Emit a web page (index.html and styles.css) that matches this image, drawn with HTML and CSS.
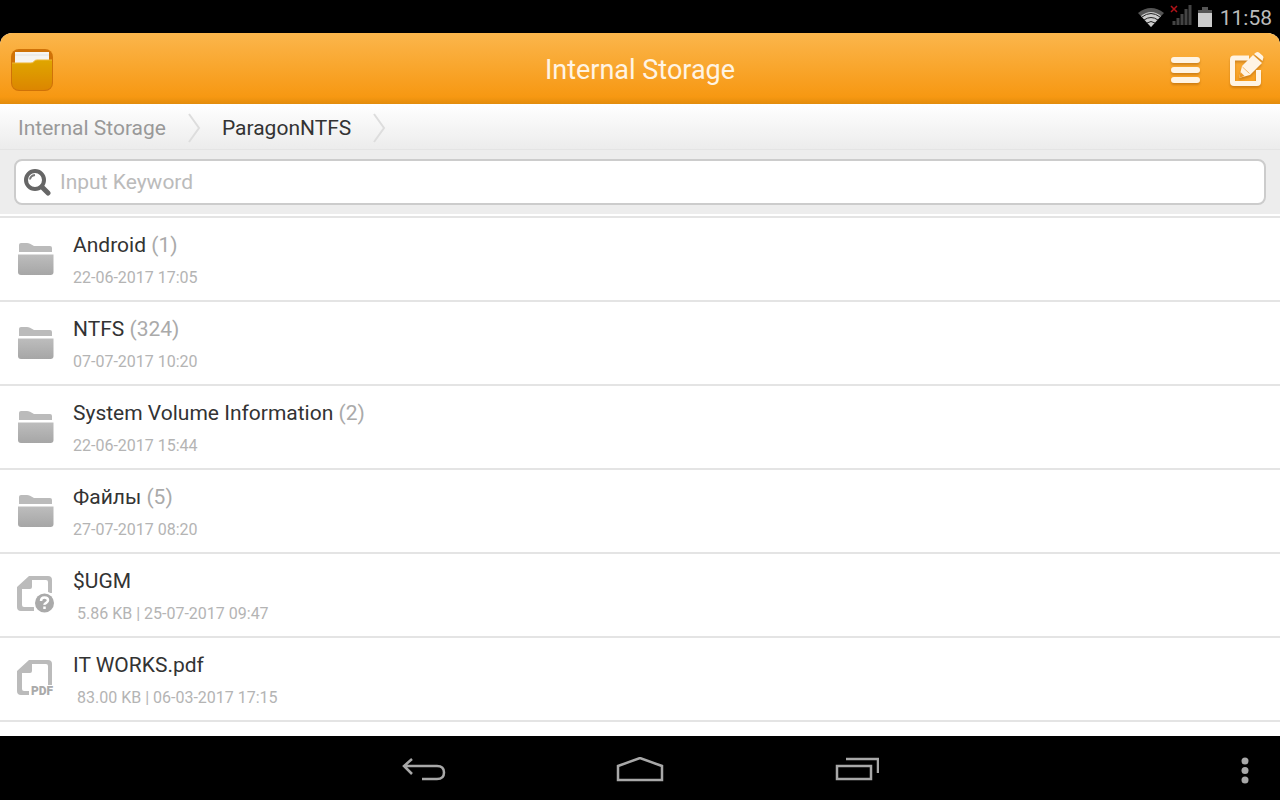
FILE: index.html
```html
<!DOCTYPE html>
<html lang="en">
<head>
    <meta charset="UTF-8">
    <meta name="viewport" content="width=device-width, initial-scale=1.0">
    <title>Internal Storage</title>
    <link rel="stylesheet" href="styles.css">
</head>
<body>
    <!-- shared icons -->
    <svg class="sprite" aria-hidden="true">
        <defs>
            <linearGradient id="grey" x1="0" y1="0" x2="0" y2="1">
                <stop offset="0" stop-color="#bdbdbd"/>
                <stop offset="1" stop-color="#a6a6a6"/>
            </linearGradient>
            <linearGradient id="gold" x1="0" y1="0" x2="0" y2="1">
                <stop offset="0" stop-color="#dfa600"/>
                <stop offset="1" stop-color="#dc8600"/>
            </linearGradient>
        </defs>
        <symbol id="folder" viewBox="0 0 40 40">
            <path d="M2 13V6q0-2 2-2H10q1.500 0 3 .8l4 2.200H33q2 0 2 2V13z" fill="#bbb"/>
            <path d="M1 15.500H36.500V33q0 3-3 3H4q-3 0-3-3z" fill="url(#grey)"/>
        </symbol>
        <symbol id="page" viewBox="0 0 40 40">
            <path d="M12 1H31q4 0 4 4V18H31V7q0-2-2-2H15V12q0 2-2 2H5V30q0 2 2 2H17V36H4q-4 0-4-4V12z" fill="#bbb"/>
        </symbol>
    </svg>

    <div class="status-bar">
        <svg class="wifi" width="26" height="20" viewBox="0 0 26 20">
            <path d="M0 6Q13-4 26 6L13 20z" fill="#555"/>
            <path d="M3 9Q13 1 23 9L13 20z" fill="#ccc"/>
            <path d="M4 10Q13 3 22 10M6 13Q13 8 20 13M9 16Q13 13 17 16" fill="none" stroke="#222" stroke-width="1"/>
        </svg>
        <svg class="signal" width="24" height="21" viewBox="0 0 24 21">
            <path d="M4 20v-4M8 20v-7M12 20V9M16 20V4M20 20V0" stroke="#444" stroke-width="3"/>
            <path d="M1 1l6 6M7 1L1 7" stroke="#b01218" stroke-width="1.500"/>
        </svg>
        <svg class="battery" width="14" height="20" viewBox="0 0 14 20">
            <path d="M4 0h6v3h4v4H0V3h4z" fill="#555"/>
            <path d="M0 6h14v14H0z" fill="#ccc"/>
        </svg>
        <span class="clock">11:58</span>
    </div>

    <div class="app">
        <header>
            <svg class="logo" width="44" height="44" viewBox="0 0 44 44">
                <rect x="1" y="1" width="42" height="42" rx="8" fill="#cf7208"/>
                <path d="M5 4H39V24H5z" fill="#f6f4f2"/>
                <path d="M5 7H39" stroke="#e2e2e2" stroke-width="1"/>
                <path d="M2 15H21q2 0 3-1.500t3-1.500H42V34q0 8-8 8H10q-8 0-8-8z" fill="url(#gold)"/>
                <path d="M2 15H21q2 0 3-1.500t3-1.500H42" fill="none" stroke="#efb530" stroke-width="1"/>
            </svg>
            <h1>Internal Storage</h1>
            <div class="actions">
                <button type="button" aria-label="Menu">
                    <svg width="36" height="40" viewBox="0 0 36 40">
                        <path d="M8 9H31M8 19H31M8 29H31" stroke="#fff4e4" stroke-width="6" stroke-linecap="round"/>
                    </svg>
                </button>
                <button type="button" aria-label="Edit">
                    <svg width="36" height="40" viewBox="0 0 36 40">
                        <path d="M21 7H6q-1.500 0-1.500 1.500V31q0 1.500 1.500 1.500H29q1.500 0 1.500-1.500V19" fill="none" stroke="#fff4e4" stroke-width="5"/>
                        <path d="M11 27L14 15L25 4L34 12L22 24z" fill="#fff4e4"/>
                        <path d="M26 3L28 1.500q1.500-1 3 0L35 5q1 1.500 0 3L34.500 10z" fill="#fff4e4"/>
                        <path d="M14.500 16l7 6.500" stroke="#f5b764" stroke-width="1"/>
                        <path d="M11 27l1.500-6 4 4z" fill="#ee9a28"/>
                    </svg>
                </button>
            </div>
        </header>

        <nav class="breadcrumb" aria-label="Path">
            <a href="#">Internal Storage</a>
            <svg width="14" height="30" viewBox="0 0 14 30"><path d="M2 1l10 14L2 29" fill="none" stroke="#ddd" stroke-width="2"/></svg>
            <a href="#" class="current">ParagonNTFS</a>
            <svg width="14" height="30" viewBox="0 0 14 30"><path d="M2 1l10 14L2 29" fill="none" stroke="#ddd" stroke-width="2"/></svg>
        </nav>

        <form class="search">
            <label class="search-box">
                <svg width="28" height="28" viewBox="0 0 28 28">
                    <circle cx="11" cy="12" r="9" fill="none" stroke="#666" stroke-width="4"/>
                    <path d="M18 19l6 6" stroke="#666" stroke-width="5" stroke-linecap="round"/>
                    <path d="M6 11.500Q6.500 7.500 11 7" fill="none" stroke="#777" stroke-width="2"/>
                </svg>
                <input type="text" placeholder="Input Keyword" aria-label="Input Keyword">
            </label>
        </form>

        <ul class="files">
            <li>
                <svg class="icon"><use href="#folder"/></svg>
                <div>
                    <div class="name">Android <span>(1)</span></div>
                    <div class="meta">22-06-2017 17:05</div>
                </div>
            </li>
            <li>
                <svg class="icon"><use href="#folder"/></svg>
                <div>
                    <div class="name">NTFS <span>(324)</span></div>
                    <div class="meta">07-07-2017 10:20</div>
                </div>
            </li>
            <li>
                <svg class="icon"><use href="#folder"/></svg>
                <div>
                    <div class="name">System Volume Information <span>(2)</span></div>
                    <div class="meta">22-06-2017 15:44</div>
                </div>
            </li>
            <li>
                <svg class="icon"><use href="#folder"/></svg>
                <div>
                    <div class="name">Файлы <span>(5)</span></div>
                    <div class="meta">27-07-2017 08:20</div>
                </div>
            </li>
            <li>
                <svg class="icon" viewBox="0 0 40 40">
                    <use href="#page" width="40" height="40"/>
                    <circle cx="27.500" cy="28" r="11.500" fill="#fff"/>
                    <circle cx="27.500" cy="28" r="9.500" fill="#aaa"/>
                    <path d="M24 26q0-3.500 3.500-3.500t3.500 2.800q0 1.500-1.800 2.500t-1.700 2M27.500 31.500v2.500" fill="none" stroke="#fff" stroke-width="2.500"/>
                </svg>
                <div>
                    <div class="name">$UGM</div>
                    <div class="meta file">5.86 KB | 25-07-2017 09:47</div>
                </div>
            </li>
            <li>
                <svg class="icon" viewBox="0 0 40 40">
                    <use href="#page" width="40" height="40"/>
                    <path d="M12 26H37V38H12z" fill="#fff"/>
                    <path d="M31 17H35V26H31z" fill="#bbb"/>
                    <text class="badge" x="14" y="36">PDF</text>
                </svg>
                <div>
                    <div class="name">IT WORKS.pdf</div>
                    <div class="meta file">83.00 KB | 06-03-2017 17:15</div>
                </div>
            </li>
        </ul>
    </div>

    <div class="nav-bar">
        <div class="keys">
            <button type="button" aria-label="Back">
                <svg width="46" height="28" viewBox="0 0 46 28"><path d="M11 2L3 9l8 8M3 9H36q7 0 7 6.500T36 22H21" fill="none" stroke="#a8a8a8" stroke-width="2.500"/></svg>
            </button>
            <button type="button" aria-label="Home">
                <svg width="50" height="28" viewBox="0 0 50 28"><path d="M3 9L25 1l22 8v14H3z" fill="none" stroke="#a8a8a8" stroke-width="2.500"/></svg>
            </button>
            <button type="button" aria-label="Recent apps">
                <svg width="46" height="28" viewBox="0 0 46 28"><path d="M4 9H38V22H4zM13 2H45V16" fill="none" stroke="#a8a8a8" stroke-width="2.500"/></svg>
            </button>
        </div>
        <button type="button" class="more" aria-label="More">
            <svg width="10" height="28" viewBox="0 0 10 28" fill="#a8a8a8">
                <circle cx="5" cy="4" r="3.500"/>
                <circle cx="5" cy="13.500" r="3.500"/>
                <circle cx="5" cy="23" r="3.500"/>
            </svg>
        </button>
    </div>
</body>
</html>
```

FILE: styles.css
```css
* {
    box-sizing: border-box;
}

body {
    margin: 0;
    height: 100vh;
    display: flex;
    flex-direction: column;
    background: #000;
    font-family: Roboto, "Liberation Sans", sans-serif;
    color: #333;
}

svg {
    display: block;
    flex: none;
}

a {
    color: #999;
    text-decoration: none;
}

button {
    padding: 0;
    border: none;
    background: none;
    cursor: pointer;
}

.sprite {
    position: absolute;
    width: 0;
    height: 0;
}

.status-bar {
    display: flex;
    justify-content: flex-end;
    align-items: center;
    height: 33px;
    flex: none;
    padding: 0 8px;
    color: #bbb;
}

.signal {
    margin: 0 4px 2px 6px;
}

.clock {
    margin-left: 8px;
    padding-top: 2px;
    font-size: 21px;
}

.app {
    flex: 1;
    min-height: 0;
    display: flex;
    flex-direction: column;
    overflow: hidden;
    border-radius: 12px 12px 0 0;
    background: #fff;
}

header {
    display: grid;
    grid-template-columns: 1fr auto 1fr;
    align-items: center;
    height: 71px;
    flex: none;
    padding: 2px 10px 0;
    background: linear-gradient(#fbb64c, #f79812 90%, #e28c0c);
}

h1 {
    margin: 0;
    font-size: 27px;
    font-weight: 400;
    color: #fff4e4;
}

.actions {
    display: flex;
    justify-content: flex-end;
    gap: 26px;
    padding: 2px 6px 0 0;
}

.actions svg {
    filter: drop-shadow(0 2px 1px rgba(150, 80, 0, 0.4));
}

.breadcrumb {
    display: flex;
    align-items: center;
    gap: 21px;
    height: 46px;
    flex: none;
    padding: 3px 18px 0;
    font-size: 21px;
    background: linear-gradient(#fff, #ececec);
    border-bottom: 1px solid #e4e4e4;
}

.breadcrumb .current {
    color: #333;
}

.search {
    flex: none;
    padding: 9px 14px;
    background: #ededed;
    border-bottom: 2px solid #fff;
}

.search-box {
    display: flex;
    align-items: center;
    gap: 8px;
    height: 46px;
    padding: 0 8px;
    border: 2px solid #ccc;
    border-radius: 8px;
    background: #fff;
}

.search input {
    flex: 1;
    padding: 0;
    border: none;
    outline: none;
    background: none;
    font: inherit;
    font-size: 21px;
}

.search input::placeholder {
    color: #bbb;
}

.files {
    flex: 1;
    min-height: 0;
    margin: 0;
    padding: 0;
    overflow: hidden;
    list-style: none;
    border-top: 2px solid #e4e4e4;
}

.files li {
    display: flex;
    gap: 16px;
    height: 84px;
    padding: 13px 17px;
    border-bottom: 2px solid #e4e4e4;
}

.icon {
    width: 40px;
    height: 40px;
    margin-top: 8px;
}

.badge {
    font-size: 12px;
    font-weight: 900;
    fill: #aaa;
}

.name {
    font-size: 21px;
    line-height: 28px;
}

.name span {
    color: #aaa;
}

.meta {
    margin-top: 8px;
    font-size: 16px;
    line-height: 22px;
    color: #b4b4b4;
}

.meta.file {
    padding-left: 4px;
}

.nav-bar {
    display: grid;
    grid-template-columns: 1fr auto 1fr;
    align-items: center;
    height: 64px;
    flex: none;
    padding: 6px 30px 0;
}

.keys {
    display: flex;
    gap: 168px;
    grid-column: 2;
}

.more {
    justify-self: end;
}
```
